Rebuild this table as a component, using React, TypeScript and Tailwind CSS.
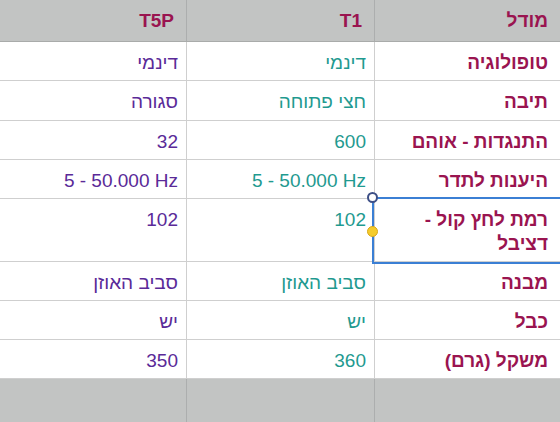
import React from 'react';

const rows: { label: string; t1: string; t5p: string; h: string }[] = [
  { label: 'טופולוגיה', t1: 'דינמי', t5p: 'דינמי', h: 'h-[39px]' },
  { label: 'תיבה', t1: 'חצי פתוחה', t5p: 'סגורה', h: 'h-[40px]' },
  { label: 'התנגדות - אוהם', t1: '600', t5p: '32', h: 'h-[39px]' },
  { label: 'היענות לתדר', t1: '5 - 50.000 Hz', t5p: '5 - 50.000 Hz', h: 'h-[39px]' },
  { label: 'רמת לחץ קול - דציבל', t1: '102', t5p: '102', h: 'h-[63px]' },
  { label: 'מבנה', t1: 'סביב האוזן', t5p: 'סביב האוזן', h: 'h-[39px]' },
  { label: 'כבל', t1: 'יש', t5p: 'יש', h: 'h-[39px]' },
  { label: 'משקל (גרם)', t1: '360', t5p: '350', h: 'h-[39px]' },
];

export default function App() {
  return (
    <div
      dir="rtl"
      className="relative w-[560px] h-[422px] overflow-hidden bg-white text-[19px] leading-[24px]"
      style={{ fontFamily: '"Liberation Sans", Arial, sans-serif' }}
    >
      {/* Header */}
      <div className="grid grid-cols-[186px_188px_186px] h-[42px] bg-[#c2c4c3] border-b border-[#a9abaa] text-[#9a1450] font-bold">
        <div className="border-l border-[#acaeae] pr-[12px] pt-[9px]">מודל</div>
        <div className="border-l border-[#acaeae] pr-[12px] pt-[9px]">T1</div>
        <div className="pr-[12px] pt-[9px]">T5P</div>
      </div>

      {/* Body */}
      {rows.map((r) => (
        <div key={r.label} className={`grid grid-cols-[186px_188px_186px] border-b border-[#cfcfcf] ${r.h}`}>
          <div className="border-l border-[#cfcfcf] pr-[12px] pl-[14px] pt-[9px] font-bold text-[#9a1450]">{r.label}</div>
          <div className="border-l border-[#cfcfcf] pr-[8px] pt-[9px] text-[#1f9a90]">
            <span dir="ltr" className="inline-block">{r.t1}</span>
          </div>
          <div className="pr-[8px] pt-[9px] text-[#5a2a98]">
            <span dir="ltr" className="inline-block">{r.t5p}</span>
          </div>
        </div>
      ))}

      {/* Footer */}
      <div className="grid grid-cols-[186px_188px_186px] h-[43px] bg-[#c2c4c3]">
        <div className="border-l border-[#acaeae]" />
        <div className="border-l border-[#acaeae]" />
        <div />
      </div>

      {/* Selection overlay */}
      <div className="absolute left-[372px] top-[197px] w-[220px] h-[67px] border-2 border-[#3b7fd4] pointer-events-none" />
      <div className="absolute left-[367px] top-[192px] w-[11px] h-[11px] rounded-full bg-white border-2 border-[#3d4f86]" />
      <div className="absolute left-[367px] top-[226px] w-[11px] h-[11px] rounded-full bg-[#f5cc2c] border border-[#d9a818]" />
    </div>
  );
}
